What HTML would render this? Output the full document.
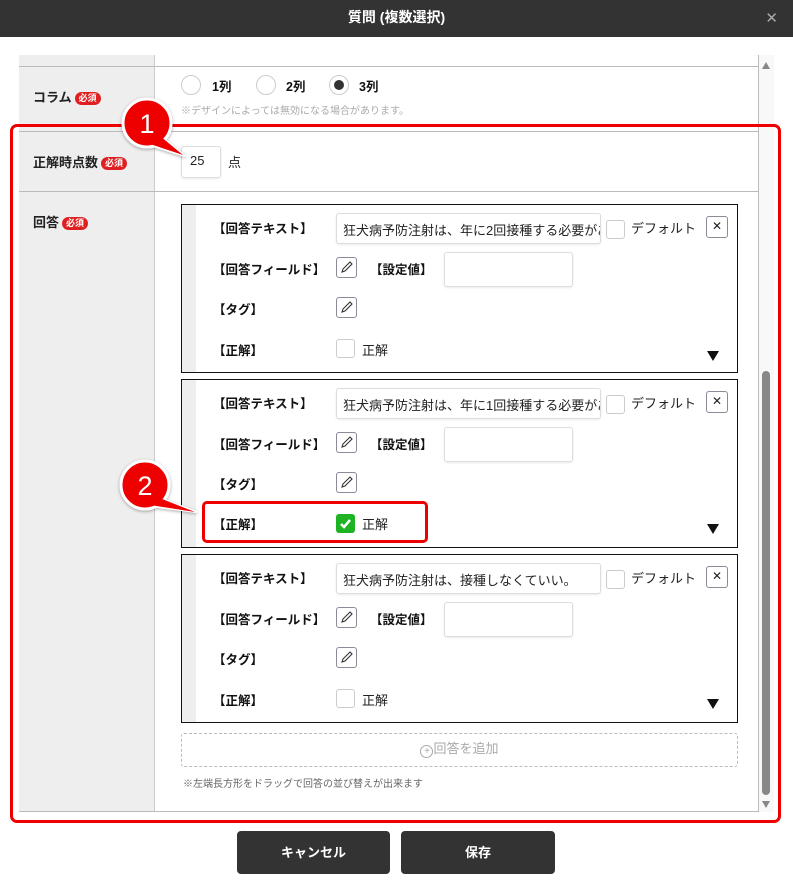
<!DOCTYPE html>
<html><head><meta charset="utf-8"><style>
*{box-sizing:border-box;margin:0;padding:0}
body{width:793px;height:892px;background:#fff;position:relative;overflow:hidden;font-family:"Liberation Sans","Noto Sans CJK JP",sans-serif;font-size:13px;color:#222}
.a{position:absolute}
.hdr{left:0;top:0;width:793px;height:37px;background:#333;color:#fff;font-weight:bold;font-size:14px;text-align:center;line-height:35px}
.lbl{font-weight:bold;font-size:13px}
.req{display:inline-block;background:#e02020;color:#fff;font-size:9px;border-radius:7px;padding:0 4px;height:13px;line-height:13px;vertical-align:1px;margin-left:3px}
.box{border:1px solid #111;background:#fff;left:181px;width:557px;height:169px}
.strip{left:0;top:0;width:14px;height:100%;background:#eee}
.t{font-size:12.5px;font-weight:bold;color:#111}
.inp{border:1px solid #ddd;border-radius:3px;background:#fff;box-shadow:0 1px 2px rgba(0,0,0,.08)}
.cb{width:19px;height:19px;border:1px solid #ccc;border-radius:3px;background:#fff}
.pen{width:21px;height:21px;border:1px solid #8a8a99;border-radius:3px;background:#fff}
.x{width:22px;height:22px;border:1px solid #8a8a99;border-radius:3px;font-size:12px;text-align:center;line-height:19px}
.tri{width:0;height:0;border-left:6px solid transparent;border-right:6px solid transparent;border-top:10px solid #111}
.rad{width:20px;height:20px;border:1px solid #ccc;border-radius:50%;background:#fff}
.btn{background:#333;color:#fff;border-radius:4px;text-align:center;line-height:43px;font-size:13px;font-weight:bold;top:831px;height:43px}
</style></head><body>
<div class="a hdr">質問 (複数選択)</div>
<div class="a" style="right:15px;top:9px;color:#aaa;font-size:15px">✕</div>

<div class="a" style="left:19px;top:55px;width:740px;height:757px;border-right:1px solid #bbb;border-bottom:1px solid #bbb"></div>
<div class="a" style="left:19px;top:55px;width:136px;height:756px;background:#eee;border-right:1px solid #ccc"></div>
<div class="a" style="left:19px;top:66px;width:739px;height:1px;background:#bbb"></div>
<div class="a" style="left:19px;top:131px;width:739px;height:1px;background:#bbb"></div>
<div class="a" style="left:19px;top:191px;width:739px;height:1px;background:#bbb"></div>
<div class="a" style="left:759px;top:55px;width:15px;height:757px;background:#f8f8f8"></div>
<div class="a" style="left:762px;top:62px;width:0;height:0;border-left:4px solid transparent;border-right:4px solid transparent;border-bottom:7px solid #888"></div>
<div class="a" style="left:762px;top:371px;width:8px;height:424px;background:#888;border-radius:4px"></div>
<div class="a" style="left:762px;top:801px;width:0;height:0;border-left:4px solid transparent;border-right:4px solid transparent;border-top:7px solid #888"></div>

<div class="a lbl" style="left:33px;top:87px">コラム<span class="req">必須</span></div>
<div class="a rad" style="left:181px;top:75px"></div><div class="a t" style="left:212px;top:76px">1列</div>
<div class="a rad" style="left:256px;top:75px"></div><div class="a t" style="left:286px;top:76px">2列</div>
<div class="a rad" style="left:329px;top:75px"><div class="a" style="left:4px;top:4px;width:10px;height:10px;border-radius:50%;background:#333"></div></div><div class="a t" style="left:359px;top:76px">3列</div>
<div class="a" style="left:181px;top:102px;font-size:10px;color:#aaa">※デザインによっては無効になる場合があります。</div>

<div class="a lbl" style="left:33px;top:152px">正解時点数<span class="req">必須</span></div>
<div class="a inp" style="left:181px;top:146px;width:40px;height:32px;padding:6px 0 0 8px;font-size:13px">25</div>
<div class="a" style="left:228px;top:152px">点</div>

<div class="a lbl" style="left:33px;top:212px">回答<span class="req">必須</span></div>

<div class="a box" style="top:204px"><div class="a strip"></div>
 <div class="a t" style="left:31px;top:13px">【回答テキスト】</div>
 <div class="a inp" style="left:154px;top:8px;width:265px;height:31px;padding:6px 6px;white-space:nowrap;overflow:hidden">狂犬病予防注射は、年に2回接種する必要があります</div>
 <div class="a cb" style="left:424px;top:15px"></div><div class="a" style="left:449px;top:13px">デフォルト</div>
 <div class="a x" style="left:524px;top:11px">✕</div>
 <div class="a t" style="left:31px;top:54px">【回答フィールド】</div>
 <div class="a pen" style="left:154px;top:52px"><svg width="19" height="19" viewBox="0 0 19 19"><path d="M5 14l1-3 7-7 2 2-7 7z" fill="none" stroke="#333" stroke-width="1.1"/></svg></div>
 <div class="a t" style="left:188px;top:54px">【設定値】</div>
 <div class="a inp" style="left:262px;top:47px;width:129px;height:35px"></div>
 <div class="a t" style="left:31px;top:94px">【タグ】</div>
 <div class="a pen" style="left:154px;top:92px"><svg width="19" height="19" viewBox="0 0 19 19"><path d="M5 14l1-3 7-7 2 2-7 7z" fill="none" stroke="#333" stroke-width="1.1"/></svg></div>
 <div class="a t" style="left:31px;top:135px">【正解】</div>
 <div class="a cb" style="left:154px;top:134px"></div><div class="a" style="left:180px;top:135px">正解</div>
 <div class="a tri" style="left:525px;top:146px"></div>
</div>

<div class="a box" style="top:379px"><div class="a strip"></div>
 <div class="a t" style="left:31px;top:13px">【回答テキスト】</div>
 <div class="a inp" style="left:154px;top:8px;width:265px;height:31px;padding:6px 6px;white-space:nowrap;overflow:hidden">狂犬病予防注射は、年に1回接種する必要があります</div>
 <div class="a cb" style="left:424px;top:15px"></div><div class="a" style="left:449px;top:13px">デフォルト</div>
 <div class="a x" style="left:524px;top:11px">✕</div>
 <div class="a t" style="left:31px;top:54px">【回答フィールド】</div>
 <div class="a pen" style="left:154px;top:52px"><svg width="19" height="19" viewBox="0 0 19 19"><path d="M5 14l1-3 7-7 2 2-7 7z" fill="none" stroke="#333" stroke-width="1.1"/></svg></div>
 <div class="a t" style="left:188px;top:54px">【設定値】</div>
 <div class="a inp" style="left:262px;top:47px;width:129px;height:35px"></div>
 <div class="a t" style="left:31px;top:94px">【タグ】</div>
 <div class="a pen" style="left:154px;top:92px"><svg width="19" height="19" viewBox="0 0 19 19"><path d="M5 14l1-3 7-7 2 2-7 7z" fill="none" stroke="#333" stroke-width="1.1"/></svg></div>
 <div class="a t" style="left:31px;top:134px">【正解】</div>
 <div class="a" style="left:154px;top:134px;width:19px;height:19px;border-radius:3px;background:#1db322"><svg width="19" height="19" viewBox="0 0 19 19"><path d="M5 10l3 3 6-7" fill="none" stroke="#fff" stroke-width="2.5"/></svg></div><div class="a" style="left:180px;top:134px">正解</div>
 <div class="a tri" style="left:525px;top:144px"></div>
</div>

<div class="a box" style="top:554px"><div class="a strip"></div>
 <div class="a t" style="left:31px;top:13px">【回答テキスト】</div>
 <div class="a inp" style="left:154px;top:8px;width:265px;height:31px;padding:6px 6px;white-space:nowrap;overflow:hidden">狂犬病予防注射は、接種しなくていい。</div>
 <div class="a cb" style="left:424px;top:15px"></div><div class="a" style="left:449px;top:13px">デフォルト</div>
 <div class="a x" style="left:524px;top:11px">✕</div>
 <div class="a t" style="left:31px;top:54px">【回答フィールド】</div>
 <div class="a pen" style="left:154px;top:52px"><svg width="19" height="19" viewBox="0 0 19 19"><path d="M5 14l1-3 7-7 2 2-7 7z" fill="none" stroke="#333" stroke-width="1.1"/></svg></div>
 <div class="a t" style="left:188px;top:54px">【設定値】</div>
 <div class="a inp" style="left:262px;top:47px;width:129px;height:35px"></div>
 <div class="a t" style="left:31px;top:94px">【タグ】</div>
 <div class="a pen" style="left:154px;top:92px"><svg width="19" height="19" viewBox="0 0 19 19"><path d="M5 14l1-3 7-7 2 2-7 7z" fill="none" stroke="#333" stroke-width="1.1"/></svg></div>
 <div class="a t" style="left:31px;top:135px">【正解】</div>
 <div class="a cb" style="left:154px;top:134px"></div><div class="a" style="left:180px;top:135px">正解</div>
 <div class="a tri" style="left:525px;top:144px"></div>
</div>

<div class="a" style="left:181px;top:733px;width:557px;height:34px;border:1px dashed #bbb;border-radius:3px;text-align:center;line-height:30px;color:#aaa;font-size:13px"><span style="display:inline-block;width:13px;height:13px;border:1px solid #aaa;border-radius:50%;font-size:10px;line-height:11px;vertical-align:-1px">+</span>回答を追加</div>
<div class="a" style="left:183px;top:775px;font-size:10px;color:#666">※左端長方形をドラッグで回答の並び替えが出来ます</div>

<div class="a" style="left:10px;top:124px;width:771px;height:699px;border:3px solid #e00;border-radius:7px"></div>
<div class="a" style="left:202px;top:501px;width:226px;height:42px;border:3px solid #e00;border-radius:5px"></div>

<svg class="a" style="left:0;top:0" width="793" height="892">
<defs><filter id="s"><feDropShadow dx="0" dy="1" stdDeviation="1.5" flood-opacity=".35"/></filter></defs>
<g filter="url(#s)">
<path d="M160 136 L185 156 L150 145Z" fill="#e00" stroke="#fff" stroke-width="2"/>
<circle cx="147" cy="123" r="24" fill="#e00" stroke="#fff" stroke-width="3"/>
<path d="M157 497 L197 512 L150 506Z" fill="#e00" stroke="#fff" stroke-width="2"/>
<circle cx="145" cy="485" r="24" fill="#e00" stroke="#fff" stroke-width="3"/>
</g>
<path d="M160 136 L183 155 L150 144Z" fill="#e00"/>
<path d="M157 497 L195 512 L150 505Z" fill="#e00"/>
<text x="147" y="133" fill="#fff" font-size="27" text-anchor="middle" font-family="Liberation Sans">1</text>
<text x="145" y="495" fill="#fff" font-size="27" text-anchor="middle" font-family="Liberation Sans">2</text>
</svg>

<div class="a btn" style="left:237px;width:153px">キャンセル</div>
<div class="a btn" style="left:401px;width:154px">保存</div>
</body></html>
